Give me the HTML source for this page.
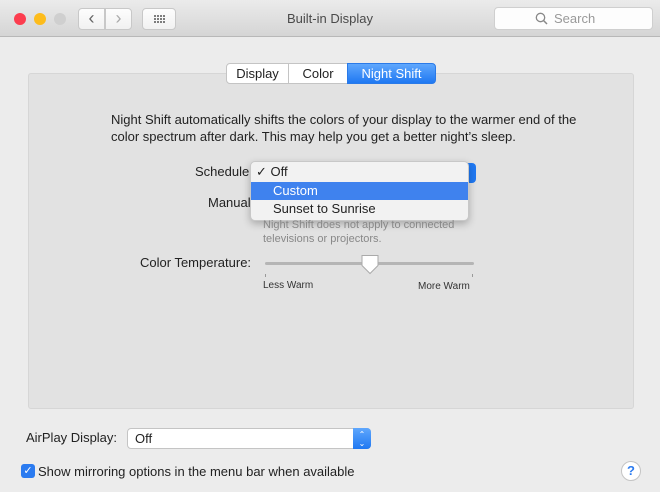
<!DOCTYPE html>
<html><head><style>
*{margin:0;padding:0;box-sizing:border-box}
body{width:660px;height:492px;overflow:hidden;background:#ececec;font-family:"Liberation Sans",sans-serif;font-size:13px;color:#222;position:relative}
.a{position:absolute}
.tb{left:0;top:0;width:660px;height:37px;background:linear-gradient(#ebebeb,#d5d5d5);border-bottom:1px solid #b8b8b8}
.dot{width:12px;height:12px;border-radius:50%;top:13px}
.btn{background:linear-gradient(#fdfdfd,#f1f1f1);border:1px solid #c8c8c8;border-radius:4px;height:22px;top:8px}
.box{left:28px;top:73px;width:606px;height:336px;background:#e2e2e2;border:1px solid #d6d6d6;border-radius:3px}
.tab{top:63px;height:21px;line-height:20px;text-align:center;font-size:13px;background:#fff;border:1px solid #c4c4c4}
</style></head><body>
<div class="a tb"></div>
<div class="a dot" style="left:14px;background:#fc3d4f"></div>
<div class="a dot" style="left:34px;background:#fdbc1c"></div>
<div class="a dot" style="left:54px;background:#cfcfcf"></div>
<div class="a btn" style="left:78px;width:27px;border-radius:4px 0 0 4px;text-align:center;line-height:19px;font-size:18px;color:#666">&#8249;</div>
<div class="a btn" style="left:105px;width:27px;border-radius:0 4px 4px 0;text-align:center;line-height:19px;font-size:18px;color:#aaa">&#8250;</div>
<div class="a btn" style="left:142px;width:34px">
<svg width="34" height="22" style="position:absolute;left:0;top:0"><g fill="#555"><circle cx="12" cy="7" r="1"/><circle cx="15" cy="7" r="1"/><circle cx="18" cy="7" r="1"/><circle cx="21" cy="7" r="1"/><circle cx="12" cy="10" r="1"/><circle cx="15" cy="10" r="1"/><circle cx="18" cy="10" r="1"/><circle cx="21" cy="10" r="1"/><circle cx="12" cy="13" r="1"/><circle cx="15" cy="13" r="1"/><circle cx="18" cy="13" r="1"/><circle cx="21" cy="13" r="1"/></g></svg></div>
<div class="a" style="left:0;width:660px;top:11px;text-align:center;font-size:13px;color:#4a4a4a">Built-in Display</div>
<div class="a" style="left:494px;top:7px;width:159px;height:23px;background:#fdfdfd;border:1px solid #cfcfcf;border-radius:4px;color:#999;font-size:13px;line-height:21px;padding-left:59px">Search</div>
<svg class="a" style="left:535px;top:12px" width="14" height="14"><circle cx="5.5" cy="5.5" r="4.2" fill="none" stroke="#888" stroke-width="1.3"/><line x1="8.5" y1="8.5" x2="12" y2="12" stroke="#888" stroke-width="1.5"/></svg>
<div class="a box"></div>
<div class="a tab" style="left:226px;width:63px;border-radius:4px 0 0 4px">Display</div>
<div class="a tab" style="left:288px;width:60px">Color</div>
<div class="a tab" style="left:347px;width:89px;background:linear-gradient(#5fa7fd,#1f78f2);color:#fff;border-color:#2a7ae8;border-radius:0 4px 4px 0">Night Shift</div>
<div class="a" style="left:111px;top:111px;line-height:17px;width:480px">Night Shift automatically shifts the colors of your display to the warmer end of the color spectrum after dark. This may help you get a better night’s sleep.</div>
<div class="a" style="left:195px;top:164px">Schedule</div>
<div class="a" style="left:208px;top:195px">Manual</div>
<div class="a" style="left:455px;top:163px;width:21px;height:20px;background:#1f78f2;border-radius:0 4px 4px 0"></div>
<div class="a" style="left:250px;top:161px;width:219px;height:60px;background:#f2f2f2;border:1px solid #c8c8c8;border-radius:5px;box-shadow:0 3px 8px rgba(0,0,0,.25)"></div>
<div class="a" style="left:256px;top:164px">✓ Off</div>
<div class="a" style="left:251px;top:182px;width:217px;height:18px;background:#3f82ee"></div>
<div class="a" style="left:273px;top:183px;color:#fff">Custom</div>
<div class="a" style="left:273px;top:201px">Sunset to Sunrise</div>
<div class="a" style="left:263px;top:218px;font-size:11px;color:#888;line-height:14px">Night Shift does not apply to connected<br>televisions or projectors.</div>
<div class="a" style="left:140px;top:255px">Color Temperature:</div>
<div class="a" style="left:265px;top:262px;width:209px;height:3px;background:#b5b5b5;border-radius:2px"></div>
<div class="a" style="left:265px;top:274px;width:1px;height:3px;background:#999"></div>
<div class="a" style="left:472px;top:274px;width:1px;height:3px;background:#999"></div>
<svg class="a" style="left:360px;top:254px" width="20" height="22"><path d="M2 1.5h16v10l-8 8-8-8z" fill="#fff" stroke="#aaa"/></svg>
<div class="a" style="left:263px;top:280px;font-size:10px;color:#333">Less Warm</div>
<div class="a" style="left:418px;top:281px;font-size:10px;color:#333">More Warm</div>
<div class="a" style="left:26px;top:430px">AirPlay Display:</div>
<div class="a" style="left:127px;top:428px;width:244px;height:21px;background:#fff;border:1px solid #c4c4c4;border-radius:4px;padding-left:7px;line-height:19px">Off</div>
<div class="a" style="left:353px;top:428px;width:18px;height:21px;background:linear-gradient(#5fa7fd,#1f78f2);border-radius:0 4px 4px 0;color:#fff;font-size:8px;text-align:center;line-height:9px;padding-top:2px">&#8963;<br>&#8964;</div>
<div class="a" style="left:21px;top:464px;width:14px;height:14px;background:#2b7bf0;border-radius:3px;color:#fff;font-size:11px;text-align:center;line-height:14px">✓</div>
<div class="a" style="left:38px;top:464px">Show mirroring options in the menu bar when available</div>
<div class="a" style="left:621px;top:461px;width:20px;height:20px;border-radius:50%;background:#fff;border:1px solid #c4c4c4;color:#2b7bf0;text-align:center;line-height:18px;font-size:13px;font-weight:bold">?</div>
</body></html>
